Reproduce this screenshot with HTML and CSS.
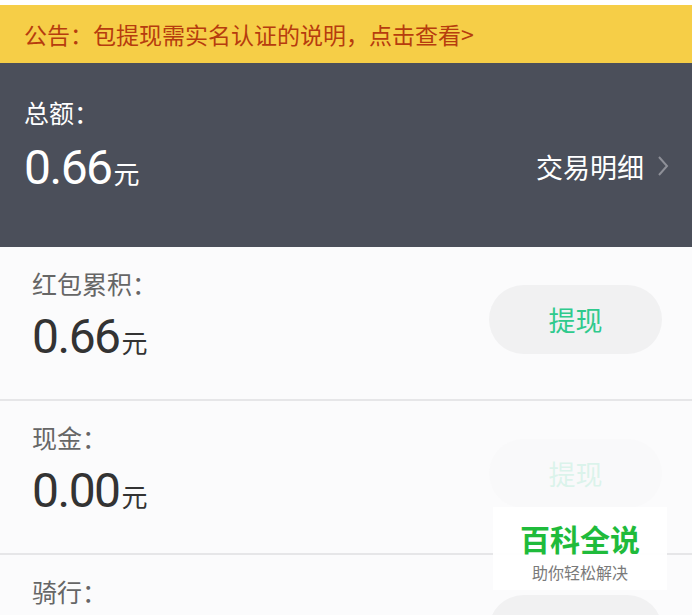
FILE: index.html
```html
<!DOCTYPE html>
<html lang="zh-CN">
<head>
<meta charset="utf-8">
<link rel="stylesheet" href="styles.css">
</head>
<body>
<div class="page">
  <div class="notice">公告：包提现需实名认证的说明，点击查看&gt;</div>
  <div class="total">
    <div class="total-label">总额：</div>
    <div class="total-line">
      <div class="amount amount-light"><span class="num">0.66</span><span class="unit">元</span></div>
      <div class="detail">交易明细
        <svg class="chev" width="14" height="24" viewBox="0 0 14 24"><polyline points="3,3 11,12 3,21" fill="none" stroke="#8e9098" stroke-width="2"/></svg>
      </div>
    </div>
  </div>
  <div class="row">
    <div class="col">
      <div class="label">红包累积：</div>
      <div class="amount"><span class="num">0.66</span><span class="unit">元</span></div>
    </div>
    <div class="btn">提现</div>
  </div>
  <div class="row">
    <div class="col">
      <div class="label">现金：</div>
      <div class="amount"><span class="num">0.00</span><span class="unit">元</span></div>
    </div>
    <div class="btn btn-off">提现</div>
  </div>
  <div class="row row-last">
    <div class="col">
      <div class="label">骑行：</div>
    </div>
    <div class="btn btn-cut"></div>
  </div>
  <div class="mark">
    <div class="mark-title">百科全说</div>
    <div class="mark-sub">助你轻松解决</div>
  </div>
</div>
</body>
</html>
```
FILE: styles.css
```css
html, body {
  margin: 0;
  padding: 0;
  background: #ffffff;
}
body {
  width: 692px;
  height: 615px;
  overflow: hidden;
  font-family: "Noto Sans CJK SC", "Noto Sans", sans-serif;
}
.page {
  position: relative;
  height: 615px;
  overflow: hidden;
  padding-top: 5px;
  box-sizing: border-box;
}
.notice {
  height: 58px;
  box-sizing: border-box;
  background: #f6ce47;
  color: #b63c0e;
  font-size: 23px;
  line-height: 58px;
  padding-left: 24px;
  white-space: nowrap;
}
.total {
  background: #4b4f5a;
  height: 184px;
  box-sizing: border-box;
  padding: 33px 24px 0 24px;
  color: #ffffff;
}
.total-label {
  font-size: 25px;
  line-height: 32px;
}
.total-line {
  display: flex;
  justify-content: space-between;
  align-items: center;
  margin-top: 14px;
}
.amount {
  display: flex;
  align-items: baseline;
  color: #333333;
  white-space: nowrap;
}
.amount-light {
  color: #ffffff;
}
.num {
  font-family: Roboto, "Noto Sans", sans-serif;
  font-size: 48px;
  letter-spacing: -1.5px;
  line-height: 52px;
}
.unit {
  font-size: 26px;
  margin-left: 2px;
}
.detail {
  display: flex;
  align-items: center;
  font-size: 27px;
  gap: 12px;
  margin-top: -4px;
  margin-right: -2px;
}
.chev {
  display: block;
}
.row {
  display: flex;
  justify-content: space-between;
  align-items: flex-start;
  height: 154px;
  box-sizing: border-box;
  padding: 21px 30px 0 32px;
  background: #fbfbfc;
  border-bottom: 2px solid #e6e6e8;
}
.label {
  font-size: 25px;
  line-height: 30px;
  color: #666666;
}
.col .amount {
  margin-top: 13px;
}
.btn {
  margin-top: 17px;
  width: 173px;
  height: 69px;
  border-radius: 35px;
  background: #f1f1f2;
  color: #2fca8d;
  font-size: 27px;
  line-height: 69px;
  text-align: center;
}
.btn-off {
  opacity: 0.15;
}
.btn-cut {
  margin-top: 19px;
}
.mark {
  position: absolute;
  left: 493px;
  top: 507px;
  width: 174px;
  height: 83px;
  background: rgba(255, 255, 255, 0.96);
  text-align: center;
}
.mark-title {
  font-size: 30px;
  font-weight: 700;
  color: #1fbb3b;
  line-height: 34px;
  margin-top: 14px;
}
.mark-sub {
  font-size: 16px;
  color: #7a7a7a;
  line-height: 22px;
  margin-top: 6px;
}
```
